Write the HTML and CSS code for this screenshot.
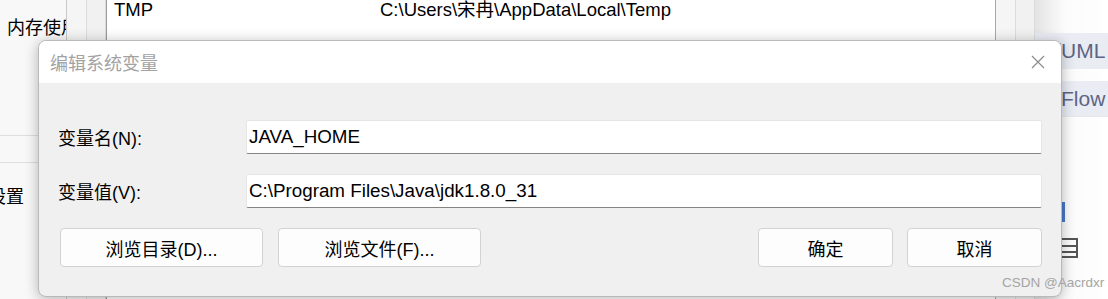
FILE: index.html
```html
<!DOCTYPE html>
<html lang="zh-CN">
<head>
  <meta charset="UTF-8">
  <title>编辑系统变量</title>
  <link rel="stylesheet" href="styles.css">
</head>
<body>

  <!-- window behind the dialog -->
  <div class="backdrop">
    <div class="nav">
      <div class="nav-item">内存使用</div>
      <div class="nav-rule first"></div>
      <div class="nav-rule"></div>
      <div class="nav-item cut">设置</div>
    </div>
    <div class="strip light"></div>
    <div class="strip"></div>
    <div class="var-list">
      <div class="var-row">
        <span class="var-name">TMP</span>
        <span class="var-value">C:\Users\宋冉\AppData\Local\Temp</span>
      </div>
    </div>
    <div class="strip light"></div>
    <div class="strip"></div>
    <div class="side">
      <div class="side-tag">(UML</div>
      <div class="side-tag">(Flow</div>
      <div class="side-rule"></div>
      <div class="side-mark blue"></div>
      <div class="side-mark box"></div>
    </div>
  </div>

  <!-- Edit dialog -->
  <div class="dialog">
    <div class="title-bar">
      <span class="title">编辑系统变量</span>
      <svg class="close" width="14" height="14" viewBox="0 0 14 14">
        <path d="M1 1 L13 13 M13 1 L1 13" stroke="#8b8b8b" stroke-width="1.2" fill="none"/>
      </svg>
    </div>
    <div class="dialog-body">
      <div class="field">
        <label>变量名(N):</label>
        <div class="input">JAVA_HOME</div>
      </div>
      <div class="field">
        <label>变量值(V):</label>
        <div class="input">C:\Program Files\Java\jdk1.8.0_31</div>
      </div>
      <div class="actions">
        <button class="btn wide">浏览目录(D)...</button>
        <button class="btn wide">浏览文件(F)...</button>
        <div class="spacer"></div>
        <button class="btn">确定</button>
        <button class="btn">取消</button>
      </div>
    </div>
  </div>

  <div class="watermark">CSDN @Aacrdxr</div>

</body>
</html>
```

FILE: styles.css
```css
* {
  box-sizing: border-box;
}

body {
  margin: 0;
  width: 1108px;
  height: 299px;
  overflow: hidden;
  position: relative;
  background: #ffffff;
  font-family: "Liberation Sans", "Noto Sans CJK SC", sans-serif;
  color: #000;
}

/* background window */
.backdrop {
  display: flex;
  height: 299px;
}

.nav {
  width: 67px;
  flex-shrink: 0;
  background: #f8f8f8;
  border-right: 1px solid #c9c9c9;
  overflow: hidden;
  white-space: nowrap;
}
.nav-item {
  font-size: 18px;
  line-height: 24px;
  padding-left: 7px;
  margin-top: 16px;
}
.nav-item.cut {
  margin-left: -19px;
  margin-top: 22px;
}
.nav-rule {
  height: 1px;
  background: #dedede;
  margin-top: 26px;
}
.nav-rule.first {
  margin-top: 95px;
}

.strip {
  width: 19px;
  flex-shrink: 0;
  background: #f1f1f1;
  border-right: 1px solid #dcdcdc;
}
.strip.light {
  width: 20px;
  background: #f5f5f5;
}

.var-list {
  width: 890px;
  flex-shrink: 0;
  background: #fff;
  border-left: 1px solid #9c9c9c;
  border-right: 1px solid #a8a8a8;
}
.var-row {
  display: flex;
  font-size: 18.5px;
  line-height: 20px;
  padding-left: 7px;
}
.var-name {
  width: 266px;
}

.side {
  flex: 1;
  background: linear-gradient(to right, #e3e3e3, #fbfbfb 40%, #fff);
  padding-top: 33px;
  overflow: hidden;
  white-space: nowrap;
}
.side-tag {
  height: 36px;
  margin-bottom: 12px;
  background: #e9ecf3;
  color: #5d6585;
  font-size: 21px;
  line-height: 36px;
  padding-left: 19px;
}
.side-rule {
  height: 1px;
  background: #e6e6e6;
  margin-top: -13px;
}
.side-mark.blue {
  width: 3px;
  height: 20px;
  margin: 85px 0 0 27px;
  background: #4a78c8;
}
.side-mark.box {
  width: 18px;
  height: 20px;
  margin: 16px 0 0 25px;
  border: 2px solid #555;
  border-left: none;
  background: linear-gradient(#555, #555) 0 5px / 100% 2px no-repeat,
              linear-gradient(#555, #555) 0 11px / 100% 2px no-repeat;
}

/* dialog */
.dialog {
  position: absolute;
  left: 38px;
  top: 40px;
  width: 1024px;
  height: 257px;
  border: 1px solid #b9b9b9;
  border-radius: 8px;
  overflow: hidden;
  background: #f0f0f0;
  box-shadow: 0 2px 14px rgba(0, 0, 0, 0.28);
  display: flex;
  flex-direction: column;
}

.title-bar {
  height: 42px;
  background: #fff;
  display: flex;
  align-items: center;
  padding: 0 16px 0 11px;
}
.title {
  flex: 1;
  font-size: 18px;
  color: #a2a2a2;
}

.dialog-body {
  flex: 1;
  padding: 37px 19px 0 19px;
}

.field {
  display: flex;
  align-items: center;
  margin-bottom: 20px;
}
.field label {
  width: 188px;
  font-size: 18px;
  padding-bottom: 1px;
}
.input {
  flex: 1;
  height: 34px;
  background: #fff;
  border: 1px solid #e6e6e6;
  border-bottom: 1px solid #858585;
  border-radius: 2px;
  padding-left: 2px;
  font-size: 18.8px;
  line-height: 31px;
  white-space: nowrap;
}

.actions {
  display: flex;
  margin-top: 6px;
  padding-left: 2px;
}
.spacer {
  flex: 1;
}
.btn {
  width: 135px;
  height: 39px;
  margin-left: 14px;
  background: #fdfdfd;
  border: 1px solid #d2d2d2;
  border-radius: 4px;
  font-family: "Liberation Sans", "Noto Sans CJK SC", sans-serif;
  font-size: 18px;
  color: #000;
  padding: 0;
}
.btn.wide {
  width: 203px;
  margin-left: 0;
  margin-right: 15px;
}

.watermark {
  position: absolute;
  left: 1002px;
  top: 275px;
  font-size: 13.5px;
  color: #a5a5a5;
  white-space: nowrap;
}
```
